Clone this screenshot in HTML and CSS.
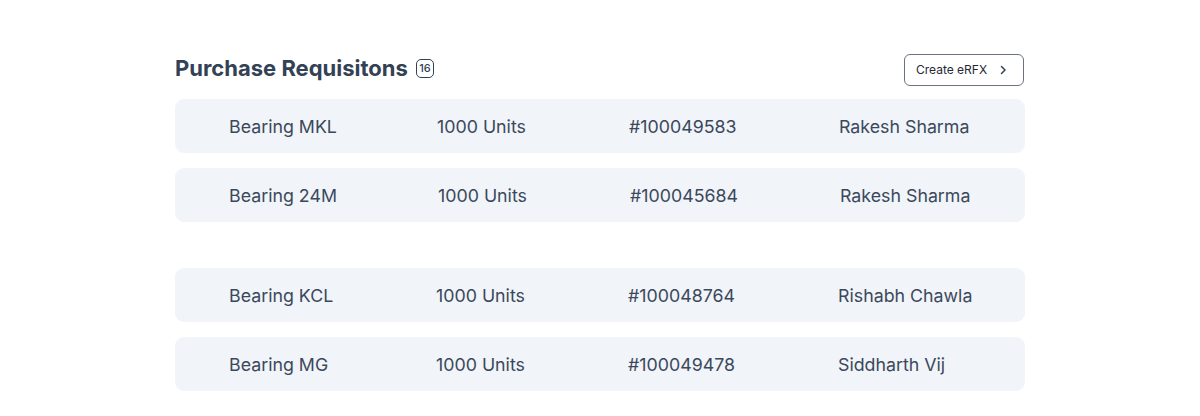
FILE: index.html
```html
<!DOCTYPE html>
<html lang="en">
<head>
    <meta charset="UTF-8">
    <title>Purchase Requisitons</title>
    <link rel="stylesheet" href="styles.css">
</head>
<body>
<div class="panel">
    <div class="panel-head">
        <h2 class="title">Purchase Requisitons <span class="count">16</span></h2>
        <button class="btn-erfx">Create eRFX
            <svg width="12" height="12" viewBox="0 0 12 12"><path d="M4.5 2.5 8 6l-3.5 3.5" fill="none" stroke="#334155" stroke-width="1.5" stroke-linecap="round" stroke-linejoin="round"/></svg>
        </button>
    </div>

    <div class="group">
        <div class="row"><span>Bearing MKL</span><span>1000 Units</span><span>#100049583</span><span>Rakesh Sharma</span></div>
        <div class="row"><span>Bearing 24M</span><span class="nudge">1000 Units</span><span class="nudge">#100045684</span><span class="nudge">Rakesh Sharma</span></div>
    </div>

    <div class="group">
        <div class="row tight"><span>Bearing KCL</span><span>1000 Units</span><span>#100048764</span><span>Rishabh Chawla</span></div>
        <div class="row tight"><span>Bearing MG</span><span>1000 Units</span><span>#100049478</span><span>Siddharth Vij</span></div>
    </div>
</div>
</body>
</html>
```

FILE: styles.css
```css
body {
    margin: 0;
    background: #ffffff;
    font-family: 'Inter', 'Noto Sans', sans-serif;
    color: #334155;
}

.panel {
    width: 850px;
    margin: 0 auto;
    padding-top: 54px;
}

.panel-head {
    display: flex;
    align-items: center;
    justify-content: space-between;
    height: 31px;
    margin-bottom: 14px;
}

.title {
    margin: -3px 0 0;
    font-size: 22px;
    font-weight: 700;
    color: #334155;
    display: flex;
    align-items: center;
    gap: 8px;
}

.count {
    display: inline-flex;
    align-items: center;
    justify-content: center;
    width: 16px;
    height: 17px;
    border: 1.3px solid #334155;
    border-radius: 5px;
    font-size: 11px;
    font-weight: 500;
}

.btn-erfx {
    display: flex;
    align-items: center;
    gap: 10px;
    height: 32px;
    width: 120px;
    padding: 0 0 0 11px;
    margin-right: 1px;
    border: 1px solid #6b7280;
    border-radius: 6px;
    background: #fff;
    font-family: inherit;
    font-size: 12px;
    color: #1f2937;
}

.group {
    display: flex;
    flex-direction: column;
    gap: 15px;
}

.group + .group {
    margin-top: 46px;
}

.row {
    display: grid;
    grid-template-columns: 208px 192px 210px 1fr;
    align-items: center;
    height: 54px;
    padding-left: 54px;
    background: #f1f4f8;
    border-radius: 9px;
    font-size: 17.8px;
    color: #3b485c;
}

.row .nudge {
    margin-left: 1px;
}

.row.tight {
    grid-template-columns: 207px 192px 210px 1fr;
}
```
